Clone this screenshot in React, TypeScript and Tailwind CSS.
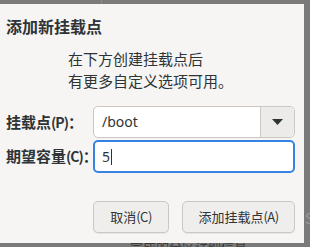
export default function App() {
    const font = { fontFamily: '"Noto Sans CJK SC", "Noto Sans", sans-serif' }
    const narrow = "text-[14px] tracking-[-1px]"

    return (
        <div className="relative w-[310px] h-[247px] overflow-hidden bg-[#7a7a7a] pt-[4px]" style={font}>
            {/* stuff behind the dialog */}
            <div className="absolute left-[101px] top-0 h-[4px] w-px bg-[#8c8c8c]" />
            <div className="absolute left-[130px] top-[240px] text-[13px] leading-none text-[#3a3a3a]">完成的分区详细信息</div>
            <div className="absolute left-[305px] top-[208px] text-[14px] text-[#9a9a9a]">S</div>

            <div className="relative flex flex-col w-[304px] h-[239px] bg-[#f6f5f4]">
                <h1 className="pl-[6px] pt-[11px] text-[16px] font-bold leading-[22px] text-[#2e3436]">添加新挂载点</h1>

                <div className="pl-[68px] pt-[11px] text-[15px] leading-[22px] text-[#2e3436]">
                    <p>在下方创建挂载点后</p>
                    <p>有更多自定义选项可用。</p>
                </div>

                <div className="grid grid-cols-[87px_202px] items-center gap-y-[2px] pl-[6px] pt-[14px]">
                    <label className="whitespace-nowrap text-[15px] font-bold text-[#2e3436]">挂载点<span className={narrow}>(P)</span>：</label>
                    <div className="flex h-[32px] rounded-[5px] border border-[#cdc7c2] bg-white">
                        <span className="flex-1 pl-[8px] text-[14px] leading-[30px] text-[#2e3436]" style={{ fontFamily: '"Noto Sans", sans-serif' }}>/boot</span>
                        <button className="flex w-[34px] items-center justify-center rounded-r-[5px] border-l border-[#cdc7c2] bg-[#edebe9]">
                            <svg width="11" height="6" viewBox="0 0 11 6">
                                <path d="M0 0h11L5.5 6z" fill="#2e3436" />
                            </svg>
                        </button>
                    </div>

                    <label className="whitespace-nowrap text-[15px] font-bold text-[#2e3436]">期望容量<span className={narrow}>(C)</span>：</label>
                    <div className="flex h-[33px] items-center rounded-[5px] border-2 border-[#3584e4] bg-white pl-[7px]">
                        <span className="text-[14px] text-[#2e3436]" style={{ fontFamily: '"Noto Sans", sans-serif' }}>5</span>
                        <span className="ml-px h-[16px] w-px bg-[#2e3436]" />
                    </div>
                </div>

                <div className="flex justify-end gap-[13px] pr-[9px] pt-[28px]">
                    <button className="h-[32px] w-[76px] rounded-[5px] border border-[#cdc7c2] bg-[#f0eeec] text-[13px] text-[#2e3436] shadow-[0_1px_0_rgba(0,0,0,0.06)]">取消<span className="tracking-[-0.5px]">(C)</span></button>
                    <button className="h-[32px] w-[113px] rounded-[5px] border border-[#cdc7c2] bg-[#f0eeec] text-[13px] text-[#2e3436] shadow-[0_1px_0_rgba(0,0,0,0.06)]">添加挂载点<span className="tracking-[-0.5px]">(A)</span></button>
                </div>
            </div>
        </div>
    )
}
